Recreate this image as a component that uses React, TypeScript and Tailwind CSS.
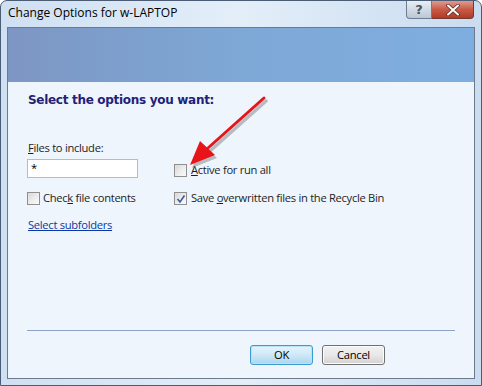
import React from "react";

function CheckBox({ checked }: { checked?: boolean }) {
  return (
    <span className="relative flex h-[13px] w-[13px] shrink-0 items-center justify-center border border-[#8f8f8f] bg-gradient-to-br from-[#dcdcdc] to-[#fbfbfb]">
      <span className="h-[9px] w-[9px] bg-gradient-to-br from-[#d9d9d9] via-[#ececec] to-[#f8f8f8]" />
      {checked && (
        <svg className="absolute left-[1px] top-[1px]" width="10" height="10" viewBox="0 0 10 10">
          <path d="M1.5 5 L4 8 L8.5 1.5" fill="none" stroke="#3a5b9e" strokeWidth="1.6" />
        </svg>
      )}
    </span>
  );
}

export default function App() {
  const body = { fontFamily: '"Open Sans", "Noto Sans", sans-serif' };
  return (
    <div
      className="relative h-[386px] w-[482px] overflow-hidden bg-white"
      style={body}
    >
      <div className="flex h-[386px] w-[482px] flex-col rounded-t-[7px] border border-[#4b5d75] bg-gradient-to-r from-[#cfe0f2] via-[#e3eef9] to-[#c9dcf0]">
        {/* Title bar */}
        <div className="flex h-[26px] items-start justify-between">
          <div className="pl-[7px] pt-[4px] text-[12px] leading-[16px] text-black">
            Change Options for w-LAPTOP
          </div>
          <div className="mr-[7px] flex">
            <div className="flex h-[18px] w-[26px] items-center justify-center rounded-bl-[4px] border border-t-0 border-[#6e7d90] bg-gradient-to-b from-[#e8eef5] to-[#bcc7d4] text-[13px] font-bold leading-none text-[#4a5568]" style={{ fontFamily: '"DejaVu Sans", sans-serif' }}>
              ?
            </div>
            <div className="flex h-[18px] w-[42px] items-center justify-center rounded-br-[4px] border border-l-0 border-t-0 border-[#6e3a33] bg-gradient-to-b from-[#e09a8e] via-[#c75a47] to-[#b33a22]">
              <svg width="14" height="12" viewBox="0 0 14 12">
                <path d="M2 1.5 L12 10.5 M12 1.5 L2 10.5" stroke="#5b2a22" strokeWidth="3.6" strokeLinecap="round" />
                <path d="M2 1.5 L12 10.5 M12 1.5 L2 10.5" stroke="#ffffff" strokeWidth="2" strokeLinecap="round" />
              </svg>
            </div>
          </div>
        </div>
        {/* Client */}
        <div className="relative mx-[6px] flex h-[352px] flex-col border border-[#6d7a8c] bg-[#eef5fd]">
          <div className="h-[54px] bg-gradient-to-r from-[#7d96c3] via-[#7ea8d6] to-[#7eaee0]" />
          <div className="flex flex-1 flex-col px-[19px] text-[11.2px] tracking-[-0.3px]">
            <div
              className="mt-[10px] pl-[1px] text-[12px] font-bold leading-[16px] tracking-normal text-[#1f2277]"
              style={{ fontFamily: '"DejaVu Sans", Verdana, sans-serif', letterSpacing: "-0.3px" }}
            >
              Select the options you want:
            </div>
            <div className="mt-[32px] flex">
              <div className="flex w-[147px] flex-col">
                <div className="pl-[1px] leading-[16px] text-[#1e1e1e]">
                  <span className="underline">F</span>iles to include:
                </div>
                <div className="mt-[3px] flex h-[19px] w-[111px] items-start border border-[#b5bcc6] bg-white pl-[3px] leading-[16px]">
                  *
                </div>
              </div>
              <div className="mt-[22px] flex items-center gap-[4px]">
                <CheckBox />
                <span className="leading-[16px] text-[#1e1e1e]">
                  <span className="underline">A</span>ctive for run all
                </span>
              </div>
            </div>
            <div className="mt-[12px] flex">
              <div className="flex w-[147px] items-center gap-[3px]">
                <CheckBox />
                <span className="leading-[16px] text-[#1e1e1e]">
                  Chec<span className="underline">k</span> file contents
                </span>
              </div>
              <div className="flex items-center gap-[4px]">
                <CheckBox checked />
                <span className="leading-[16px] text-[#1e1e1e]">
                  Save <span className="underline">o</span>verwritten files in the Recycle Bin
                </span>
              </div>
            </div>
            <div className="mt-[11px] pl-[1px] leading-[16px] text-[#0b37a8] underline">
              Select subfolders
            </div>
            <div className="flex-1" />
            <div className="h-px bg-[#8da4c8]" />
            <div className="mb-[13px] mt-[14px] flex justify-end gap-[9px] pr-[70px]">
              <button className="h-[20px] w-[63px] rounded-[3px] border border-[#3c9bd0] bg-gradient-to-b from-[#e6f4fb] via-[#cfe8f6] to-[#a9d6f0] leading-none text-black shadow-[inset_0_0_0_1px_#b8e2f8]">
                OK
              </button>
              <button className="h-[20px] w-[63px] rounded-[3px] border border-[#707070] bg-gradient-to-b from-[#f2f2f2] via-[#e8e8e8] to-[#d2d2d2] leading-none text-black shadow-[inset_0_0_0_1px_#fcfcfc]">
                Cancel
              </button>
            </div>
          </div>
          {/* Red arrow annotation */}
          <svg className="pointer-events-none absolute left-[170px] top-[60px]" width="100" height="90" viewBox="0 0 100 90">
            <g transform="translate(2,3)" opacity="0.35">
              <path d="M86 10 L30 60" stroke="#555" strokeWidth="3.5" strokeLinecap="round" />
              <path d="M12 77 L22 53 L37 67 Z" fill="#555" />
            </g>
            <path d="M86 10 L30 60" stroke="#e8141a" strokeWidth="3" strokeLinecap="round" />
            <path d="M12 77 L22 53 L37 67 Z" fill="#e8141a" />
          </svg>
        </div>
      </div>
    </div>
  );
}
